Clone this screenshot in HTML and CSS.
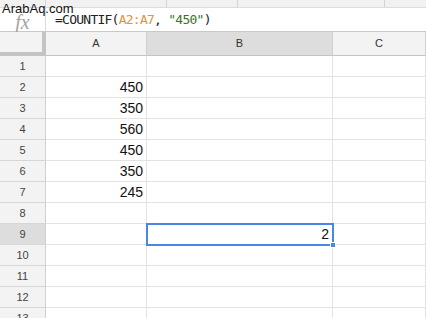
FILE: index.html
```html
<!DOCTYPE html>
<html>
<head>
<meta charset="utf-8">
<link rel="stylesheet" href="styles.css">
</head>
<body>
<div class="app">
  <div class="watermark">ArabAq.com</div>
  <div class="topstrip">
    <span class="seg s1"></span><span class="seg s2"></span><span class="seg s3"></span><span class="seg s4"></span><span class="seg s5"></span>
  </div>
  <div class="formulabar">
    <div class="fx">fx</div>
    <div class="formula">=COUNTIF(<span class="ref">A2:A7</span>, <span class="str">"450"</span>)</div>
  </div>
  <div class="sheet">
    <div class="corner"></div>
    <div class="colhead">A</div>
    <div class="colhead sel">B</div>
    <div class="colhead">C</div>

    <div class="rowhead">1</div><div class="cell"></div><div class="cell"></div><div class="cell"></div>
    <div class="rowhead">2</div><div class="cell num">450</div><div class="cell"></div><div class="cell"></div>
    <div class="rowhead">3</div><div class="cell num">350</div><div class="cell"></div><div class="cell"></div>
    <div class="rowhead">4</div><div class="cell num">560</div><div class="cell"></div><div class="cell"></div>
    <div class="rowhead">5</div><div class="cell num">450</div><div class="cell"></div><div class="cell"></div>
    <div class="rowhead">6</div><div class="cell num">350</div><div class="cell"></div><div class="cell"></div>
    <div class="rowhead">7</div><div class="cell num">245</div><div class="cell"></div><div class="cell"></div>
    <div class="rowhead">8</div><div class="cell"></div><div class="cell"></div><div class="cell"></div>
    <div class="rowhead sel">9</div><div class="cell"></div><div class="cell num active">2<span class="handle"></span></div><div class="cell"></div>
    <div class="rowhead">10</div><div class="cell"></div><div class="cell"></div><div class="cell"></div>
    <div class="rowhead">11</div><div class="cell"></div><div class="cell"></div><div class="cell"></div>
    <div class="rowhead">12</div><div class="cell"></div><div class="cell"></div><div class="cell"></div>
    <div class="rowhead">13</div><div class="cell"></div><div class="cell"></div><div class="cell"></div>
  </div>
</div>
</body>
</html>
```
FILE: styles.css
```css
* { box-sizing: border-box; }
html, body { margin: 0; padding: 0; background: #fff; }
body { width: 426px; height: 318px; overflow: hidden; font-family: "Liberation Sans", Arial, sans-serif; }
.app { position: relative; width: 426px; height: 318px; overflow: hidden; }

.watermark {
  position: absolute; left: 2px; top: 1px;
  font-size: 13px; color: #111; line-height: 16px; z-index: 5;
}

.topstrip {
  height: 8px; background: #f1f1f1; border-bottom: 1px solid #dcdcdc;
  display: flex;
}
.seg { height: 100%; border-right: 1px solid #d4d4d4; }
.s1 { width: 46px; }
.s2 { width: 121px; }
.s3 { width: 71px; }
.s4 { width: 147px; }
.s5 { flex: 1; border-right: none; }

.formulabar {
  height: 24px; display: flex; align-items: stretch;
  border-bottom: 1px solid #c8c8c8;
}
.fx {
  width: 46px; border-right: 1px solid #dcdcdc;
  font-family: "Liberation Serif", "Times New Roman", serif; font-style: italic;
  color: #a3a3a3; font-size: 20px; text-align: center; line-height: 20px; padding-top: 4px;
}
.formula {
  padding-left: 9px; font-family: "DejaVu Sans Mono", monospace;
  font-size: 13px; line-height: 24px; color: #222; letter-spacing: -0.75px;
}
.ref { color: #e69138; }
.str { color: #38761d; }

.sheet {
  display: grid;
  grid-template-columns: 46px 101px 186px 93px;
  grid-template-rows: 24px repeat(13, 21px);
}
.corner {
  background: #f3f3f3;
  border-right: 4px solid #c4c4c4;
  border-bottom: 4px solid #c4c4c4;
}
.colhead {
  background: #f3f3f3; border-right: 1px solid #cfcfcf; border-bottom: 1px solid #c4c4c4;
  font-size: 11px; color: #333; text-align: center; line-height: 23px;
}
.colhead.sel { background: #dddddd; }
.rowhead {
  background: #f3f3f3; border-right: 1px solid #cfcfcf; border-bottom: 1px solid #d6d6d6;
  font-size: 11px; color: #444; text-align: center; line-height: 20px;
}
.rowhead.sel { background: #dddddd; }
.cell {
  border-right: 1px solid #e2e2e2; border-bottom: 1px solid #e2e2e2;
  font-size: 14px; color: #111; line-height: 20px; padding-right: 3px;
}
.num { text-align: right; }
.active {
  position: relative;
  outline: 2px solid #4a86e8; outline-offset: -1px;
  z-index: 2;
}
.handle {
  position: absolute; right: -4px; bottom: -4px; width: 6px; height: 6px;
  background: #4a86e8; border: 1px solid #fff;
}
```
